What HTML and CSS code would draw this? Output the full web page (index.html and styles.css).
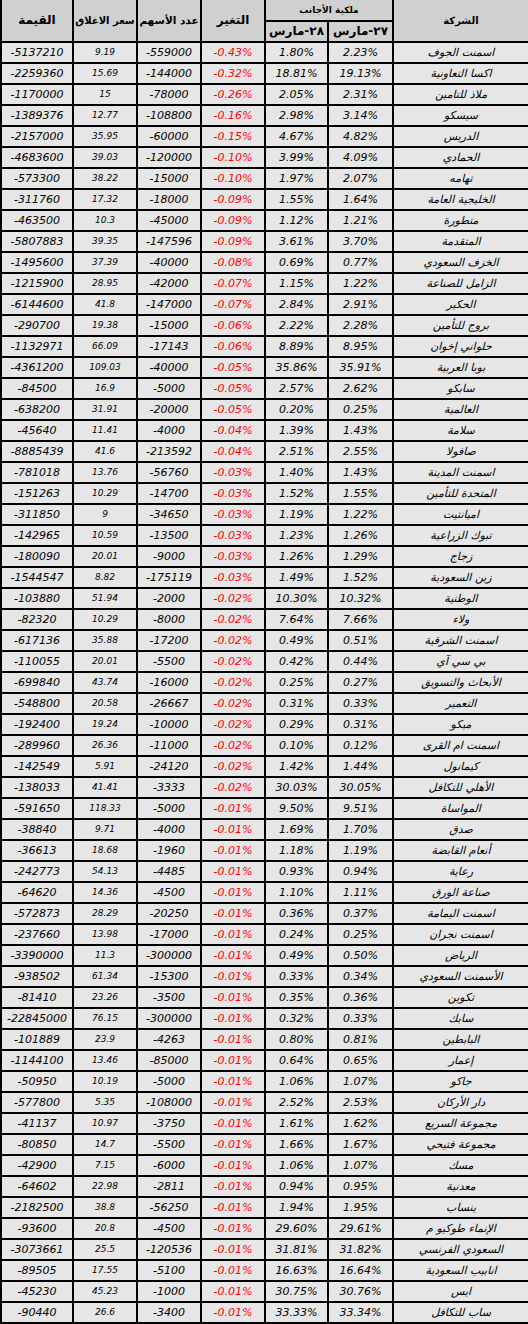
FILE: index.html
```html
<!DOCTYPE html>
<html lang="ar">
<head>
<meta charset="utf-8">
<title>ملكية الأجانب</title>
<link rel="stylesheet" href="styles.css">
</head>
<body>
<table class="grid" dir="rtl">
<colgroup>
<col class="c-name"><col class="c-d27"><col class="c-d28"><col class="c-chg"><col class="c-qty"><col class="c-price"><col class="c-val">
</colgroup>
<thead>
<tr class="h1">
<th rowspan="2" class="h-name">الشركة</th>
<th colspan="2" class="h-own">ملكية الأجانب</th>
<th rowspan="2" class="h-big">التغير</th>
<th rowspan="2" class="h-qty">عدد الأسهم</th>
<th rowspan="2" class="h-price">سعر الاغلاق</th>
<th rowspan="2" class="h-big">القيمة</th>
</tr>
<tr class="h2">
<th class="h-date">٢٧-مارس</th>
<th class="h-date">٢٨-مارس</th>
</tr>
</thead>
<tbody>
<tr><td class="name">اسمنت الجوف</td><td class="pct">2.23%</td><td class="pct">1.80%</td><td class="chg">-0.43%</td><td class="num">-559000</td><td class="price">9.19</td><td class="num">-5137210</td></tr>
<tr><td class="name">اكسا التعاونية</td><td class="pct">19.13%</td><td class="pct">18.81%</td><td class="chg">-0.32%</td><td class="num">-144000</td><td class="price">15.69</td><td class="num">-2259360</td></tr>
<tr><td class="name">ملاذ للتامين</td><td class="pct">2.31%</td><td class="pct">2.05%</td><td class="chg">-0.26%</td><td class="num">-78000</td><td class="price">15</td><td class="num">-1170000</td></tr>
<tr><td class="name">سيسكو</td><td class="pct">3.14%</td><td class="pct">2.98%</td><td class="chg">-0.16%</td><td class="num">-108800</td><td class="price">12.77</td><td class="num">-1389376</td></tr>
<tr><td class="name">الدريس</td><td class="pct">4.82%</td><td class="pct">4.67%</td><td class="chg">-0.15%</td><td class="num">-60000</td><td class="price">35.95</td><td class="num">-2157000</td></tr>
<tr><td class="name">الحمادي</td><td class="pct">4.09%</td><td class="pct">3.99%</td><td class="chg">-0.10%</td><td class="num">-120000</td><td class="price">39.03</td><td class="num">-4683600</td></tr>
<tr><td class="name">تهامه</td><td class="pct">2.07%</td><td class="pct">1.97%</td><td class="chg">-0.10%</td><td class="num">-15000</td><td class="price">38.22</td><td class="num">-573300</td></tr>
<tr><td class="name">الخليجية العامة</td><td class="pct">1.64%</td><td class="pct">1.55%</td><td class="chg">-0.09%</td><td class="num">-18000</td><td class="price">17.32</td><td class="num">-311760</td></tr>
<tr><td class="name">متطورة</td><td class="pct">1.21%</td><td class="pct">1.12%</td><td class="chg">-0.09%</td><td class="num">-45000</td><td class="price">10.3</td><td class="num">-463500</td></tr>
<tr><td class="name">المتقدمة</td><td class="pct">3.70%</td><td class="pct">3.61%</td><td class="chg">-0.09%</td><td class="num">-147596</td><td class="price">39.35</td><td class="num">-5807883</td></tr>
<tr><td class="name">الخزف السعودي</td><td class="pct">0.77%</td><td class="pct">0.69%</td><td class="chg">-0.08%</td><td class="num">-40000</td><td class="price">37.39</td><td class="num">-1495600</td></tr>
<tr><td class="name">الزامل للصناعة</td><td class="pct">1.22%</td><td class="pct">1.15%</td><td class="chg">-0.07%</td><td class="num">-42000</td><td class="price">28.95</td><td class="num">-1215900</td></tr>
<tr><td class="name">الحكير</td><td class="pct">2.91%</td><td class="pct">2.84%</td><td class="chg">-0.07%</td><td class="num">-147000</td><td class="price">41.8</td><td class="num">-6144600</td></tr>
<tr><td class="name">بروج للتأمين</td><td class="pct">2.28%</td><td class="pct">2.22%</td><td class="chg">-0.06%</td><td class="num">-15000</td><td class="price">19.38</td><td class="num">-290700</td></tr>
<tr><td class="name">حلواني إخوان</td><td class="pct">8.95%</td><td class="pct">8.89%</td><td class="chg">-0.06%</td><td class="num">-17143</td><td class="price">66.09</td><td class="num">-1132971</td></tr>
<tr><td class="name">بوبا العربية</td><td class="pct">35.91%</td><td class="pct">35.86%</td><td class="chg">-0.05%</td><td class="num">-40000</td><td class="price">109.03</td><td class="num">-4361200</td></tr>
<tr><td class="name">سابكو</td><td class="pct">2.62%</td><td class="pct">2.57%</td><td class="chg">-0.05%</td><td class="num">-5000</td><td class="price">16.9</td><td class="num">-84500</td></tr>
<tr><td class="name">العالمية</td><td class="pct">0.25%</td><td class="pct">0.20%</td><td class="chg">-0.05%</td><td class="num">-20000</td><td class="price">31.91</td><td class="num">-638200</td></tr>
<tr><td class="name">سلامة</td><td class="pct">1.43%</td><td class="pct">1.39%</td><td class="chg">-0.04%</td><td class="num">-4000</td><td class="price">11.41</td><td class="num">-45640</td></tr>
<tr><td class="name">صافولا</td><td class="pct">2.55%</td><td class="pct">2.51%</td><td class="chg">-0.04%</td><td class="num">-213592</td><td class="price">41.6</td><td class="num">-8885439</td></tr>
<tr><td class="name">اسمنت المدينة</td><td class="pct">1.43%</td><td class="pct">1.40%</td><td class="chg">-0.03%</td><td class="num">-56760</td><td class="price">13.76</td><td class="num">-781018</td></tr>
<tr><td class="name">المتحدة للتأمين</td><td class="pct">1.55%</td><td class="pct">1.52%</td><td class="chg">-0.03%</td><td class="num">-14700</td><td class="price">10.29</td><td class="num">-151263</td></tr>
<tr><td class="name">اميانتيت</td><td class="pct">1.22%</td><td class="pct">1.19%</td><td class="chg">-0.03%</td><td class="num">-34650</td><td class="price">9</td><td class="num">-311850</td></tr>
<tr><td class="name">تبوك الزراعية</td><td class="pct">1.26%</td><td class="pct">1.23%</td><td class="chg">-0.03%</td><td class="num">-13500</td><td class="price">10.59</td><td class="num">-142965</td></tr>
<tr><td class="name">زجاج</td><td class="pct">1.29%</td><td class="pct">1.26%</td><td class="chg">-0.03%</td><td class="num">-9000</td><td class="price">20.01</td><td class="num">-180090</td></tr>
<tr><td class="name">زين السعودية</td><td class="pct">1.52%</td><td class="pct">1.49%</td><td class="chg">-0.03%</td><td class="num">-175119</td><td class="price">8.82</td><td class="num">-1544547</td></tr>
<tr><td class="name">الوطنية</td><td class="pct">10.32%</td><td class="pct">10.30%</td><td class="chg">-0.02%</td><td class="num">-2000</td><td class="price">51.94</td><td class="num">-103880</td></tr>
<tr><td class="name">ولاء</td><td class="pct">7.66%</td><td class="pct">7.64%</td><td class="chg">-0.02%</td><td class="num">-8000</td><td class="price">10.29</td><td class="num">-82320</td></tr>
<tr><td class="name">اسمنت الشرقية</td><td class="pct">0.51%</td><td class="pct">0.49%</td><td class="chg">-0.02%</td><td class="num">-17200</td><td class="price">35.88</td><td class="num">-617136</td></tr>
<tr><td class="name">بي سي آي</td><td class="pct">0.44%</td><td class="pct">0.42%</td><td class="chg">-0.02%</td><td class="num">-5500</td><td class="price">20.01</td><td class="num">-110055</td></tr>
<tr><td class="name">الأبحاث والتسويق</td><td class="pct">0.27%</td><td class="pct">0.25%</td><td class="chg">-0.02%</td><td class="num">-16000</td><td class="price">43.74</td><td class="num">-699840</td></tr>
<tr><td class="name">التعمير</td><td class="pct">0.33%</td><td class="pct">0.31%</td><td class="chg">-0.02%</td><td class="num">-26667</td><td class="price">20.58</td><td class="num">-548800</td></tr>
<tr><td class="name">ميكو</td><td class="pct">0.31%</td><td class="pct">0.29%</td><td class="chg">-0.02%</td><td class="num">-10000</td><td class="price">19.24</td><td class="num">-192400</td></tr>
<tr><td class="name">اسمنت ام القرى</td><td class="pct">0.12%</td><td class="pct">0.10%</td><td class="chg">-0.02%</td><td class="num">-11000</td><td class="price">26.36</td><td class="num">-289960</td></tr>
<tr><td class="name">كيمانول</td><td class="pct">1.44%</td><td class="pct">1.42%</td><td class="chg">-0.02%</td><td class="num">-24120</td><td class="price">5.91</td><td class="num">-142549</td></tr>
<tr><td class="name">الأهلي للتكافل</td><td class="pct">30.05%</td><td class="pct">30.03%</td><td class="chg">-0.02%</td><td class="num">-3333</td><td class="price">41.41</td><td class="num">-138033</td></tr>
<tr><td class="name">المواساة</td><td class="pct">9.51%</td><td class="pct">9.50%</td><td class="chg">-0.01%</td><td class="num">-5000</td><td class="price">118.33</td><td class="num">-591650</td></tr>
<tr><td class="name">صدق</td><td class="pct">1.70%</td><td class="pct">1.69%</td><td class="chg">-0.01%</td><td class="num">-4000</td><td class="price">9.71</td><td class="num">-38840</td></tr>
<tr><td class="name">أنعام القابضة</td><td class="pct">1.19%</td><td class="pct">1.18%</td><td class="chg">-0.01%</td><td class="num">-1960</td><td class="price">18.68</td><td class="num">-36613</td></tr>
<tr><td class="name">رعاية</td><td class="pct">0.94%</td><td class="pct">0.93%</td><td class="chg">-0.01%</td><td class="num">-4485</td><td class="price">54.13</td><td class="num">-242773</td></tr>
<tr><td class="name">صناعة الورق</td><td class="pct">1.11%</td><td class="pct">1.10%</td><td class="chg">-0.01%</td><td class="num">-4500</td><td class="price">14.36</td><td class="num">-64620</td></tr>
<tr><td class="name">اسمنت اليمامة</td><td class="pct">0.37%</td><td class="pct">0.36%</td><td class="chg">-0.01%</td><td class="num">-20250</td><td class="price">28.29</td><td class="num">-572873</td></tr>
<tr><td class="name">اسمنت نجران</td><td class="pct">0.25%</td><td class="pct">0.24%</td><td class="chg">-0.01%</td><td class="num">-17000</td><td class="price">13.98</td><td class="num">-237660</td></tr>
<tr><td class="name">الرياض</td><td class="pct">0.50%</td><td class="pct">0.49%</td><td class="chg">-0.01%</td><td class="num">-300000</td><td class="price">11.3</td><td class="num">-3390000</td></tr>
<tr><td class="name">الأسمنت السعودي</td><td class="pct">0.34%</td><td class="pct">0.33%</td><td class="chg">-0.01%</td><td class="num">-15300</td><td class="price">61.34</td><td class="num">-938502</td></tr>
<tr><td class="name">تكوين</td><td class="pct">0.36%</td><td class="pct">0.35%</td><td class="chg">-0.01%</td><td class="num">-3500</td><td class="price">23.26</td><td class="num">-81410</td></tr>
<tr><td class="name">سابك</td><td class="pct">0.33%</td><td class="pct">0.32%</td><td class="chg">-0.01%</td><td class="num">-300000</td><td class="price">76.15</td><td class="num">-22845000</td></tr>
<tr><td class="name">البابطين</td><td class="pct">0.81%</td><td class="pct">0.80%</td><td class="chg">-0.01%</td><td class="num">-4263</td><td class="price">23.9</td><td class="num">-101889</td></tr>
<tr><td class="name">إعمار</td><td class="pct">0.65%</td><td class="pct">0.64%</td><td class="chg">-0.01%</td><td class="num">-85000</td><td class="price">13.46</td><td class="num">-1144100</td></tr>
<tr><td class="name">جاكو</td><td class="pct">1.07%</td><td class="pct">1.06%</td><td class="chg">-0.01%</td><td class="num">-5000</td><td class="price">10.19</td><td class="num">-50950</td></tr>
<tr><td class="name">دار الأركان</td><td class="pct">2.53%</td><td class="pct">2.52%</td><td class="chg">-0.01%</td><td class="num">-108000</td><td class="price">5.35</td><td class="num">-577800</td></tr>
<tr><td class="name">مجموعة السريع</td><td class="pct">1.62%</td><td class="pct">1.61%</td><td class="chg">-0.01%</td><td class="num">-3750</td><td class="price">10.97</td><td class="num">-41137</td></tr>
<tr><td class="name">مجموعة فتيحي</td><td class="pct">1.67%</td><td class="pct">1.66%</td><td class="chg">-0.01%</td><td class="num">-5500</td><td class="price">14.7</td><td class="num">-80850</td></tr>
<tr><td class="name">مسك</td><td class="pct">1.07%</td><td class="pct">1.06%</td><td class="chg">-0.01%</td><td class="num">-6000</td><td class="price">7.15</td><td class="num">-42900</td></tr>
<tr><td class="name">معدنية</td><td class="pct">0.95%</td><td class="pct">0.94%</td><td class="chg">-0.01%</td><td class="num">-2811</td><td class="price">22.98</td><td class="num">-64602</td></tr>
<tr><td class="name">ينساب</td><td class="pct">1.95%</td><td class="pct">1.94%</td><td class="chg">-0.01%</td><td class="num">-56250</td><td class="price">38.8</td><td class="num">-2182500</td></tr>
<tr><td class="name">الإنماء طوكيو م</td><td class="pct">29.61%</td><td class="pct">29.60%</td><td class="chg">-0.01%</td><td class="num">-4500</td><td class="price">20.8</td><td class="num">-93600</td></tr>
<tr><td class="name">السعودي الفرنسي</td><td class="pct">31.82%</td><td class="pct">31.81%</td><td class="chg">-0.01%</td><td class="num">-120536</td><td class="price">25.5</td><td class="num">-3073661</td></tr>
<tr><td class="name">انابيب السعودية</td><td class="pct">16.64%</td><td class="pct">16.63%</td><td class="chg">-0.01%</td><td class="num">-5100</td><td class="price">17.55</td><td class="num">-89505</td></tr>
<tr><td class="name">ايس</td><td class="pct">30.76%</td><td class="pct">30.75%</td><td class="chg">-0.01%</td><td class="num">-1000</td><td class="price">45.23</td><td class="num">-45230</td></tr>
<tr><td class="name">ساب للتكافل</td><td class="pct">33.34%</td><td class="pct">33.33%</td><td class="chg">-0.01%</td><td class="num">-3400</td><td class="price">26.6</td><td class="num">-90440</td></tr>
</tbody>
</table>
</body>
</html>
```

FILE: styles.css
```css
html, body {
  margin: 0;
  padding: 0;
  background: #e6e6e6;
}

.grid {
  width: 528px;
  table-layout: fixed;
  border-collapse: separate;
  border-spacing: 0;
  font-family: "DejaVu Sans", sans-serif;
  color: #000;
  background: #e6e6e6;
}

.c-name { width: 136px; }
.c-d27 { width: 65px; }
.c-d28 { width: 63px; }
.c-chg { width: 64px; }
.c-qty { width: 64px; }
.c-price { width: 64px; }
.c-val { width: 72px; }

.grid th,
.grid td {
  padding: 0;
  border-left: 2px solid #000;
  border-bottom: 2px solid #000;
  text-align: center;
  vertical-align: middle;
  white-space: nowrap;
  overflow: hidden;
  line-height: 17px;
}

.grid th {
  background: #d0d0d0;
  font-weight: bold;
}

.h1 th { height: 20px; }
.h2 th { height: 19px; }

.h-name { font-size: 10px; }
.h-own { font-size: 9px; }
.h-big { font-size: 12px; }
.h-qty { font-size: 10.5px; }
.h-price { font-size: 10px; }
.h-date { font-size: 12px; }

.grid td {
  height: 19px;
  background: #e6e6e6;
  font-style: italic;
}

.pct, .chg, .num, .price {
  direction: ltr;
}

.name { font-size: 11px; }
.pct { font-size: 11px; }
.chg { font-size: 11px; color: #ff0000; }
.num { font-size: 11px; }
.price { font-size: 9px; }
```
